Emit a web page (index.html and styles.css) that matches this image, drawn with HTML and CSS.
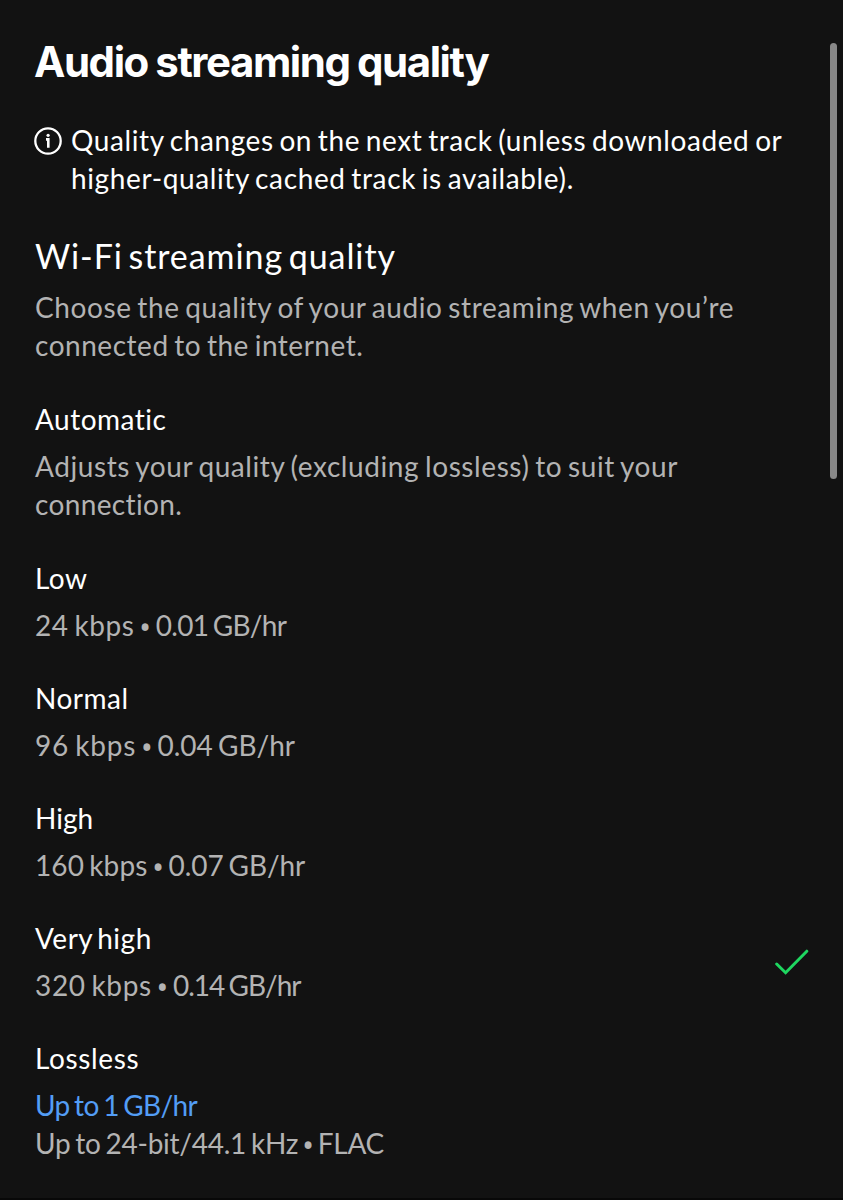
FILE: index.html
```html
<!DOCTYPE html>
<html lang="en">
<head>
    <meta charset="UTF-8">
    <meta name="viewport" content="width=device-width, initial-scale=1.0">
    <title>Audio streaming quality</title>
    <link rel="stylesheet" href="styles.css">
</head>
<body>
    <main class="sheet">
        <h1>Audio streaming quality</h1>

        <div class="notice">
            <svg class="info-icon" viewBox="0 0 28 28" aria-hidden="true">
                <circle cx="14" cy="14" r="12.7" fill="none" stroke="currentColor" stroke-width="2.3"/>
                <circle cx="14.1" cy="8.3" r="1.6" fill="currentColor"/>
                <path d="M12 12.4H14.3V20.8" fill="none" stroke="currentColor" stroke-width="2.6"/>
            </svg>
            <p>Quality changes on the next track (unless downloaded or<br><span class="notice-end">higher-quality cached track is available).</span></p>
        </div>

        <section class="intro">
            <h2>Wi-Fi streaming quality</h2>
            <p>Choose the quality of your audio streaming when you’re<br><span class="intro-end">connected to the internet.</span></p>
        </section>

        <!-- Quality options -->
        <div class="option automatic">
            <div class="option-text">
                <h3>Automatic</h3>
                <p>Adjusts your quality (excluding lossless) to suit your<br><span class="automatic-end">connection.</span></p>
            </div>
        </div>
        <div class="option">
            <div class="option-text">
                <h3>Low</h3>
                <p>24 kbps <span class="dot">•</span> <span class="usage-low">0.01 GB/hr</span></p>
            </div>
        </div>
        <div class="option">
            <div class="option-text">
                <h3>Normal</h3>
                <p><span class="rate-normal">96 kbps</span> <span class="dot">•</span> <span class="usage-normal">0.04 GB/hr</span></p>
            </div>
        </div>
        <div class="option">
            <div class="option-text">
                <h3 class="high">High</h3>
                <p><span class="rate-high">160 kbps</span> <span class="dot">•</span> <span class="usage-high">0.07 GB/hr</span></p>
            </div>
        </div>
        <div class="option">
            <div class="option-text">
                <h3>Very high</h3>
                <p><span class="rate-very-high">320 kbps</span> <span class="dot">•</span> <span class="usage-very-high">0.14 GB/hr</span></p>
            </div>
            <svg class="check" viewBox="0 0 34 26" aria-hidden="true">
                <path d="M1.7 15L10.6 23.7L31.8 2.2" fill="none" stroke="currentColor" stroke-width="3" stroke-linecap="round"/>
            </svg>
        </div>
        <div class="option">
            <div class="option-text">
                <h3 class="lossless">Lossless</h3>
                <p><span class="usage">Up to 1 GB/hr</span><br><span class="format">Up to 24-bit/44.1 kHz <span class="dot">•</span> FLAC</span></p>
            </div>
        </div>
    </main>
    <div class="scrollbar"></div>
</body>
</html>
```
FILE: styles.css
```css
* {
    box-sizing: border-box;
}
body {
    margin: 0;
    height: 1200px;
    overflow: hidden;
    background-color: #121212;
    border-bottom: 2px solid #080808;
    color: #fff;
    font-family: "Lato", "Noto Sans", sans-serif;
    font-size: 28px;
    line-height: 38px;
    letter-spacing: 0.59px;
    word-spacing: -2px;
}
h1, h2, h3, p {
    margin: 0;
    font-weight: 400;
    white-space: nowrap;
}
.sheet {
    padding: 36px 34px 0 35px;
}
h1 {
    margin-left: -1px;
    font-family: "Inter", sans-serif;
    font-size: 42px;
    line-height: 52px;
    font-weight: 700;
    letter-spacing: -1.45px;
    word-spacing: -1px;
}
.notice {
    display: flex;
    gap: 9px;
    margin-top: 33px;
}
.info-icon {
    flex: none;
    width: 28px;
    height: 28px;
    margin: 6px 0 0 -1px;
}
.notice-end {
    letter-spacing: 0.62px;
}
.intro {
    margin-top: 37px;
    color: #b3b3b3;
}
.intro-end {
    letter-spacing: 0.53px;
}
h2 {
    margin-bottom: 10px;
    font-size: 34px;
    line-height: 44px;
    letter-spacing: 0.93px;
    word-spacing: -4px;
    color: #fff;
}
.option {
    display: flex;
    align-items: center;
    justify-content: space-between;
    margin-top: 35px;
    color: #b3b3b3;
}
.automatic {
    margin: 36px 0;
}
.automatic-end {
    letter-spacing: 0.35px;
}
h3 {
    margin-bottom: 9px;
    font-size: 28px;
    line-height: 38px;
    letter-spacing: 0.5px;
    word-spacing: -3px;
    color: #fff;
}
.high {
    letter-spacing: 0;
}
.lossless {
    letter-spacing: 0.65px;
}
/* the bullet is smaller than the text face's own */
.dot {
    margin: 0 -1px;
    font-family: "Noto Sans", sans-serif;
    font-size: 31px;
    line-height: 1;
    letter-spacing: 0;
    vertical-align: -3px;
}
.usage-low {
    letter-spacing: -0.7px;
}
.rate-normal {
    letter-spacing: 0.85px;
}
.usage-normal {
    letter-spacing: 0;
}
.usage-high {
    letter-spacing: -0.1px;
}
.rate-high {
    letter-spacing: 0.1px;
}
.rate-very-high {
    letter-spacing: 0.65px;
}
.usage-very-high {
    letter-spacing: -1px;
}
.check {
    width: 34px;
    height: 26px;
    color: #1ed760;
}
.usage {
    letter-spacing: -0.65px;
    color: #539df5;
}
.format {
    letter-spacing: -0.25px;
}
.scrollbar {
    position: absolute;
    top: 43px;
    right: 6px;
    width: 7px;
    height: 436px;
    border-radius: 4px;
    background-color: #888;
}
```
